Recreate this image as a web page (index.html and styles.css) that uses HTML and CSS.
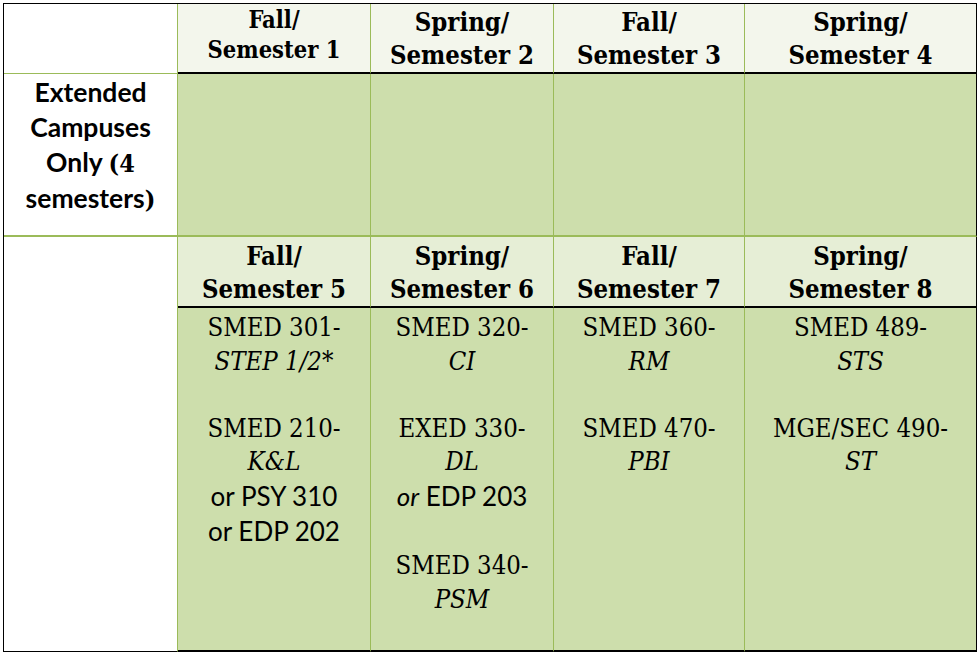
FILE: index.html
```html
<!DOCTYPE html>
<html lang="en">
<head>
<meta charset="utf-8">
<title>Semester plan</title>
<link rel="stylesheet" href="styles.css">
</head>
<body>
<table class="plan">
  <tr class="row-head-top">
    <td class="side side-top w1"></td>
    <th class="sem sem-small w2">Fall/<br>Semester 1</th>
    <th class="sem w3">Spring/<br>Semester 2</th>
    <th class="sem w4">Fall/<br>Semester 3</th>
    <th class="sem last w5">Spring/<br>Semester 4</th>
  </tr>
  <tr class="row-ext">
    <th class="side side-ext">Extended<br>Campuses<br>Only <span class="serif-b">(4</span><br>semesters<span class="serif-b">)</span></th>
    <td class="ext"></td>
    <td class="ext"></td>
    <td class="ext"></td>
    <td class="ext last"></td>
  </tr>
  <tr class="row-head-mid">
    <td class="side side-bottom" rowspan="2"></td>
    <th class="sem">Fall/<br>Semester 5</th>
    <th class="sem">Spring/<br>Semester 6</th>
    <th class="sem">Fall/<br>Semester 7</th>
    <th class="sem last">Spring/<br>Semester 8</th>
  </tr>
  <tr class="row-body">
    <td class="course">
      <p>SMED 301-</p>
      <p><i>STEP 1/2*</i></p>
      <p class="blank"></p>
      <p>SMED 210-</p>
      <p><i>K&amp;L</i></p>
      <p class="sans">or PSY 310</p>
      <p class="sans">or EDP 202</p>
    </td>
    <td class="course">
      <p>SMED 320-</p>
      <p><i>CI</i></p>
      <p class="blank"></p>
      <p>EXED 330-</p>
      <p><i>DL</i></p>
      <p class="sans"><i>or</i> EDP 203</p>
      <p class="sans blank"></p>
      <p>SMED 340-</p>
      <p><i>PSM</i></p>
    </td>
    <td class="course">
      <p>SMED 360-</p>
      <p><i>RM</i></p>
      <p class="blank"></p>
      <p>SMED 470-</p>
      <p><i>PBI</i></p>
    </td>
    <td class="course last">
      <p>SMED 489-</p>
      <p><i>STS</i></p>
      <p class="blank"></p>
      <p>MGE/SEC 490-</p>
      <p><i>ST</i></p>
    </td>
  </tr>
</table>
</body>
</html>
```
FILE: styles.css
```css
html, body {
  margin: 0;
  padding: 0;
  background: #ffffff;
}

body {
  color: #000000;
  font-family: "DejaVu Serif Condensed", "DejaVu Serif", serif;
}

.plan {
  box-sizing: border-box;
  width: 974px;
  margin: 3px 0 0 3px;
  border-collapse: separate;
  border-spacing: 0;
  table-layout: fixed;
  border-left: 1px solid #000000;
  border-top: 1px solid #000000;
}

.plan td,
.plan th {
  box-sizing: border-box;
  padding: 0 4px;
  vertical-align: top;
  text-align: center;
  border-right: 1px solid #9bbb59;
}

.plan .last {
  border-right: 1px solid #000000;
}

.w1 { width: 174px; }
.w2 { width: 193px; }
.w3 { width: 183px; }
.w4 { width: 191px; }
.w5 { width: 232px; }

/* header rows */
.sem {
  font-family: "DejaVu Serif Condensed", "DejaVu Serif", serif;
  font-weight: bold;
  font-size: 25.5px;
  line-height: 33px;
  border-bottom: 2px solid #000000;
}

.row-head-top .sem {
  height: 70px;
  padding-top: 2px;
  background: #f3f6ec;
}

.row-head-top .sem-small {
  font-size: 23.5px;
  line-height: 30px;
  padding-top: 1px;
}

.row-head-mid .sem {
  height: 71px;
  padding-top: 3px;
  background: #e6eed6;
}

/* left column */
.plan .side {
  background: #ffffff;
}

.plan .side-top {
  border-bottom: 1px solid #9bbb59;
}

.plan .side-ext {
  font-family: Lato, "Open Sans", sans-serif;
  font-weight: bold;
  font-size: 26.5px;
  line-height: 35px;
  padding-top: 1px;
  border-bottom: 2px solid #9bbb59;
}

.serif-b {
  font-family: "DejaVu Serif Condensed", "DejaVu Serif", serif;
  font-weight: bold;
  font-size: 25px;
}

.plan .side-bottom {
  border-bottom: 1px solid #000000;
}

/* green cells */
.plan .ext {
  height: 163px;
  background: #cddeac;
  border-bottom: 2px solid #9bbb59;
}

.plan .course {
  height: 344px;
  padding-top: 3px;
  background: #cddeac;
  border-bottom: 2px solid #000000;
  font-size: 25.5px;
  line-height: 33.6px;
}

.course p {
  margin: 0;
  white-space: nowrap;
}

.course .blank {
  height: 33.6px;
}

.course .sans {
  font-family: Lato, "Open Sans", sans-serif;
  font-size: 26px;
  line-height: 35px;
}

.course .sans.blank {
  height: 35px;
}
```
